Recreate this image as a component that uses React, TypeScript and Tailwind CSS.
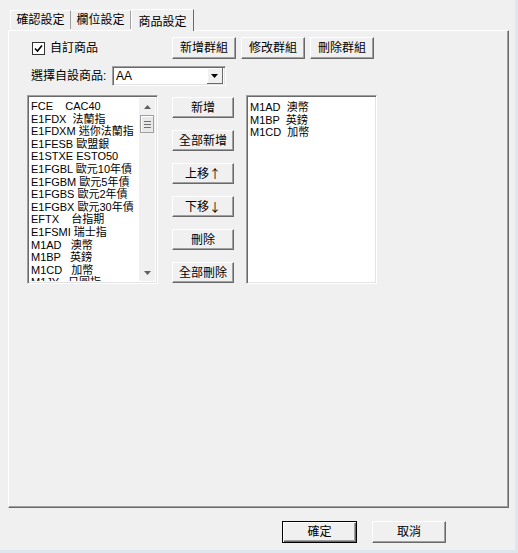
import React from "react";

const FONT = { fontFamily: '"Liberation Sans", "Noto Sans CJK TC", sans-serif' };
const CJK = { fontFamily: '"Noto Sans CJK TC", sans-serif' };

const leftItems = [
  "FCE    CAC40",
  "E1FDX  法蘭指",
  "E1FDXM 迷你法蘭指",
  "E1FESB 歐盟銀",
  "E1STXE ESTO50",
  "E1FGBL 歐元10年債",
  "E1FGBM 歐元5年債",
  "E1FGBS 歐元2年債",
  "E1FGBX 歐元30年債",
  "EFTX    台指期",
  "E1FSMI 瑞士指",
  "M1AD   澳幣",
  "M1BP   英鎊",
  "M1CD   加幣",
  "M1JY   日圓指",
];

const rightItems = ["M1AD  澳幣", "M1BP  英鎊", "M1CD  加幣"];

function Btn({
  label,
  arrow,
  className = "",
  isDefault = false,
}: {
  label: string;
  arrow?: string;
  className?: string;
  isDefault?: boolean;
}) {
  return (
    <button
      className={`flex items-center justify-center bg-[#f0f0f0] text-[12px] leading-none text-black ${
        isDefault
          ? "border border-black shadow-[inset_1px_1px_0_#ffffff,inset_-1px_-1px_0_#696969,inset_-2px_-2px_0_#a0a0a0]"
          : "border-t border-l border-t-white border-l-white border-r border-b border-r-[#696969] border-b-[#696969] shadow-[inset_-1px_-1px_0_#a0a0a0]"
      } ${className}`}
    >
      {label}
      {arrow && (
        <span className="text-[12px] leading-none" style={CJK}>
          {arrow}
        </span>
      )}
    </button>
  );
}

function Sunken({ className = "", children }: { className?: string; children?: React.ReactNode }) {
  return (
    <div
      className={`border-t border-l border-t-[#a0a0a0] border-l-[#a0a0a0] border-r border-b border-r-white border-b-white bg-white shadow-[inset_1px_1px_0_#696969,inset_-1px_-1px_0_#e3e3e3] ${className}`}
    >
      {children}
    </div>
  );
}

function ScrollBar() {
  return (
    <div className="flex h-full w-[16px] flex-col bg-[#f0f0f0]">
      <div className="flex h-[17px] items-center justify-center">
        <svg width="7" height="4" viewBox="0 0 7 4">
          <path d="M0 4 L3.5 0 L7 4 Z" fill="#606060" />
        </svg>
      </div>
      <div className="mx-[1px] flex h-[18px] flex-col items-center justify-center gap-[2px] border border-[#a0a0a0] bg-[#e8e8e8] shadow-[inset_1px_1px_0_#ffffff]">
        <div className="h-px w-[7px] bg-[#707070]" />
        <div className="h-px w-[7px] bg-[#707070]" />
        <div className="h-px w-[7px] bg-[#707070]" />
      </div>
      <div className="flex-1" />
      <div className="flex h-[17px] items-center justify-center">
        <svg width="7" height="4" viewBox="0 0 7 4">
          <path d="M0 0 L3.5 4 L7 0 Z" fill="#606060" />
        </svg>
      </div>
    </div>
  );
}

export default function App() {
  return (
    <div
      className="flex h-[553px] w-[518px] flex-col overflow-hidden border-r-[3px] border-b-[3px] border-r-[#dfe6ee] border-b-[#dfe6ee] bg-[#f0f0f0] text-black"
      style={FONT}
    >
      {/* Tabs */}
      <div className="flex h-[30px] items-end pl-[10px]">
        <div className="mb-px flex h-[19px] w-[61px] items-center justify-center border-t border-l border-t-white border-l-white border-r border-r-[#a0a0a0] text-[12px]">
          確認設定
        </div>
        <div className="mb-px flex h-[19px] w-[60px] items-center justify-center border-t border-t-white border-r border-r-[#a0a0a0] text-[12px]">
          欄位設定
        </div>
        <div className="relative z-10 -mb-px flex h-[22px] w-[63px] items-start justify-center border-t border-l border-t-white border-l-white border-r border-r-[#696969] bg-[#f0f0f0] pt-[3px] text-[12px]">
          商品設定
        </div>
      </div>

      {/* Panel */}
      <div className="ml-[8px] flex h-[478px] w-[501px] flex-col border-t border-l border-t-white border-l-white border-r border-b border-r-[#696969] border-b-[#696969] shadow-[inset_-1px_-1px_0_#a0a0a0]">
        {/* Row 1 */}
        <div className="mt-[6px] flex h-[22px] items-center">
          <div className="ml-[23px] flex w-[140px] items-center gap-[5px]">
            <div className="flex h-[13px] w-[13px] items-center justify-center border border-[#333333] bg-white">
              <svg width="9" height="9" viewBox="0 0 9 9">
                <path d="M1 4.5 L3.5 7 L8 1.5" fill="none" stroke="#000" strokeWidth="1.6" />
              </svg>
            </div>
            <span className="text-[12px] leading-none">自訂商品</span>
          </div>
          <div className="flex gap-[5px]">
            <Btn label="新增群組" className="h-[22px] w-[64px]" />
            <Btn label="修改群組" className="h-[22px] w-[64px]" />
            <Btn label="刪除群組" className="h-[22px] w-[64px]" />
          </div>
        </div>

        {/* Row 2 */}
        <div className="mt-[7px] flex h-[20px] items-center">
          <span className="ml-[22px] w-[81px] text-[12px] leading-none">選擇自設商品:</span>
          <Sunken className="flex h-[20px] w-[114px] items-center">
            <span className="flex-1 pl-[3px] text-[12px] leading-none">AA</span>
            <div className="mr-[2px] flex h-[16px] w-[16px] items-center justify-center border-r border-b border-r-[#696969] border-b-[#696969] bg-[#f0f0f0] shadow-[inset_1px_1px_0_#ffffff]">
              <svg width="7" height="4" viewBox="0 0 7 4">
                <path d="M0 0 L3.5 4 L7 0 Z" fill="#000" />
              </svg>
            </div>
          </Sunken>
        </div>

        {/* Row 3 */}
        <div className="mt-[9px] flex items-start">
          <Sunken className="ml-[18px] flex h-[189px] w-[131px] overflow-hidden p-[2px]">
            <div className="flex-1 overflow-hidden pl-px pt-[2px]">
              {leftItems.map((t) => (
                <div key={t} className="whitespace-pre text-[11px] leading-[12.6px]">
                  {t}
                </div>
              ))}
            </div>
            <ScrollBar />
          </Sunken>

          <div className="ml-[14px] mt-[2px] flex flex-col gap-[12px]">
            <Btn label="新增" className="h-[21px] w-[62px]" />
            <Btn label="全部新增" className="h-[21px] w-[62px]" />
            <Btn label="上移" arrow="↑" className="h-[21px] w-[62px]" />
            <Btn label="下移" arrow="↓" className="h-[21px] w-[62px]" />
            <Btn label="刪除" className="h-[21px] w-[62px]" />
            <Btn label="全部刪除" className="h-[21px] w-[62px]" />
          </div>

          <Sunken className="ml-[12px] h-[189px] w-[131px] overflow-hidden p-[2px]">
            <div className="pl-px pt-[3px]">
              {rightItems.map((t) => (
                <div key={t} className="whitespace-pre text-[11px] leading-[12.5px]">
                  {t}
                </div>
              ))}
            </div>
          </Sunken>
        </div>
      </div>

      {/* Footer */}
      <div className="mt-[13px] flex gap-[15px] pl-[282px]">
        <Btn label="確定" isDefault className="h-[22px] w-[75px]" />
        <Btn label="取消" className="h-[22px] w-[74px]" />
      </div>
    </div>
  );
}
